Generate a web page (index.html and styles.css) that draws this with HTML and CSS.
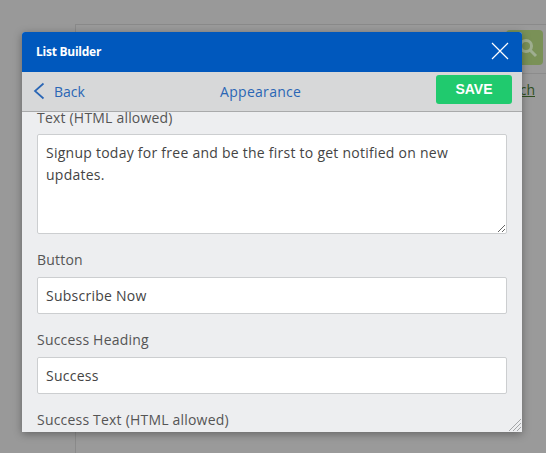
FILE: index.html
```html
<!DOCTYPE html>
<html lang="en">
<head>
    <meta charset="UTF-8">
    <title>List Builder</title>
    <link rel="stylesheet" href="styles.css">
</head>
<body>
    <div class="page-panel">
        <div class="search-row">
            <div class="search-btn">
                <svg width="22" height="22" viewBox="0 0 22 22" fill="none" stroke="#9fae90" stroke-width="3">
                    <circle cx="9" cy="9" r="5.5"/>
                    <path d="M13 13l6 6"/>
                </svg>
            </div>
        </div>
        <div class="link-row"><a class="page-link">Search</a></div>
    </div>

    <div class="modal">
        <div class="modal-header">
            <span class="modal-title">List Builder</span>
            <svg class="close-icon" width="18" height="18" viewBox="0 0 18 18" stroke="#fff" stroke-width="1.2" fill="none">
                <path d="M1 1l16 16M17 1L1 17"/>
            </svg>
        </div>
        <div class="modal-toolbar">
            <a class="back-link">
                <svg width="12" height="18" viewBox="0 0 12 18" fill="none" stroke="#2a66b5" stroke-width="1.7">
                    <path d="M10.5 1.5L2 9l8.5 7.5"/>
                </svg>
                <span>Back</span>
            </a>
            <span class="toolbar-title">Appearance</span>
            <button class="save-btn">SAVE</button>
        </div>
        <div class="modal-body">
            <label class="field-label first">Text (HTML allowed)</label>
            <textarea class="field-area">Signup today for free and be the first to get notified on new updates.</textarea>
            <label class="field-label">Button</label>
            <input class="field-input" type="text" value="Subscribe Now">
            <label class="field-label">Success Heading</label>
            <input class="field-input" type="text" value="Success">
            <label class="field-label">Success Text (HTML allowed)</label>
        </div>
        <svg class="resize-grip" width="14" height="14" viewBox="0 0 14 14" stroke="#a4a6a8" stroke-width="1" fill="none">
            <path d="M13 1L1 13M13 5L5 13M13 9l-4 4"/>
        </svg>
    </div>
</body>
</html>
```

FILE: styles.css
```css
* {
    box-sizing: border-box;
}

html, body {
    height: 100%;
}

body {
    margin: 0;
    padding: 24px 0 0 75px;
    overflow: hidden;
    background-color: #999999;
    font-family: "Open Sans", sans-serif;
}

.page-panel {
    height: 100%;
    border-top: 1px solid #8a8a8a;
    border-left: 1px solid #8a8a8a;
    background-color: #9a9a9a;
}

.search-row {
    display: flex;
    justify-content: flex-end;
    height: 49px;
    padding: 5px 3px 0 0;
    border-bottom: 1px solid #8c8c8c;
}

.search-btn {
    display: flex;
    align-items: center;
    justify-content: center;
    width: 37px;
    height: 35px;
    padding-left: 6px;
    border-radius: 4px;
    background-color: #7a9157;
}

.link-row {
    padding: 6px 11px 0 0;
    text-align: right;
    font-size: 14px;
}

.page-link {
    color: #2f4f1f;
    text-decoration: underline;
}

.modal {
    position: absolute;
    left: 22px;
    top: 32px;
    width: 500px;
    height: 400px;
    display: flex;
    flex-direction: column;
    overflow: hidden;
    background-color: #edeef0;
    border-radius: 3px 3px 0 0;
    box-shadow: 0 2px 8px rgba(0, 0, 0, 0.35);
}

.modal-header {
    display: flex;
    align-items: center;
    justify-content: space-between;
    flex: none;
    height: 40px;
    padding: 0 13px 2px 14px;
    background-color: #0058bd;
    color: #fff;
}

.modal-title {
    font-size: 12px;
    font-weight: 700;
    letter-spacing: -0.25px;
}

.modal-toolbar {
    position: relative;
    display: flex;
    align-items: center;
    justify-content: space-between;
    flex: none;
    height: 40px;
    padding: 0 10px 1px 11px;
    background-color: #d7d8d9;
    border-bottom: 1px solid #a9aaab;
    color: #2a66b5;
    font-size: 14px;
}

.back-link {
    display: flex;
    align-items: center;
    gap: 9px;
}

.toolbar-title {
    position: absolute;
    left: 198px;
    top: 10px;
    letter-spacing: 0.3px;
}

.save-btn {
    width: 76px;
    height: 29px;
    margin-bottom: 3px;
    padding-bottom: 3px;
    border: none;
    border-radius: 3px;
    background-color: #20ca6e;
    color: #fff;
    font-family: "Liberation Sans", sans-serif;
    font-size: 14px;
    font-weight: 700;
}

.modal-body {
    flex: 1;
    overflow: hidden;
    padding: 0 15px;
    color: #555;
    font-size: 14px;
    letter-spacing: 0.2px;
}

.field-label {
    display: block;
    height: 20px;
    margin: 16px 0 7px;
    line-height: 20px;
}

.field-label.first {
    margin-top: -4px;
    margin-bottom: 6px;
}

.field-area, .field-input {
    display: block;
    width: 100%;
    border: 1px solid #ccced0;
    border-radius: 2px;
    background-color: #fff;
    color: #444;
    font-family: "Open Sans", sans-serif;
    font-size: 14px;
    letter-spacing: 0.25px;
}

.field-area {
    height: 100px;
    padding: 7px 8px;
    line-height: 22px;
}

.field-input {
    height: 37px;
    padding: 0 8px;
}

.resize-grip {
    position: absolute;
    right: 0;
    bottom: 0;
}
```
